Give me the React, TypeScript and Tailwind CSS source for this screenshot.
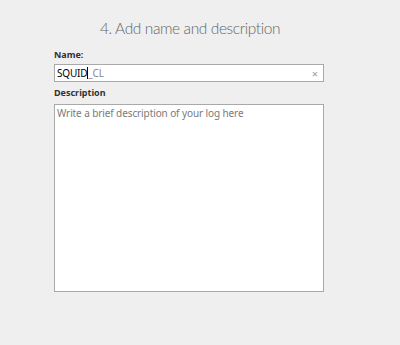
export default function App() {
  return (
    <div className="w-[400px] h-[345px] bg-[#efefef] overflow-hidden" style={{ fontFamily: "'Noto Sans', 'Open Sans', sans-serif" }}>
      <div className="pt-[18px] pl-[100px] text-[15.5px] leading-[20px] font-light text-[#666] tracking-[-0.4px]" style={{ fontFamily: "Lato, 'Noto Sans', sans-serif" }}>4. Add name and description</div>
      <div className="pl-[54px] pt-[11px] w-[324px]">
        <div className="text-[9px] leading-[12px] font-bold text-[#333]">Name:</div>
        <div className="mt-[3px] h-[18px] border border-[#a9a9a9] bg-white flex items-center pl-[2px] pr-[5px]">
          <span className="text-[10px] text-black tracking-[-0.2px]">SQUID</span>
          <span className="w-px h-[12px] bg-black"></span>
          <span className="text-[10px] text-[#888] tracking-[-0.2px]">_CL</span>
          <span className="ml-auto text-[11px] leading-none text-[#999]">×</span>
        </div>
        <div className="mt-[5px] text-[9px] leading-[12px] font-bold text-[#333]">Description</div>
        <div className="mt-[5px] h-[188px] border border-[#a9a9a9] bg-white px-[2px] pt-[1px] text-[10px] leading-[14px] text-[#7a7a7a] tracking-[-0.1px]">
          Write a brief description of your log here
        </div>
      </div>
    </div>
  );
}
